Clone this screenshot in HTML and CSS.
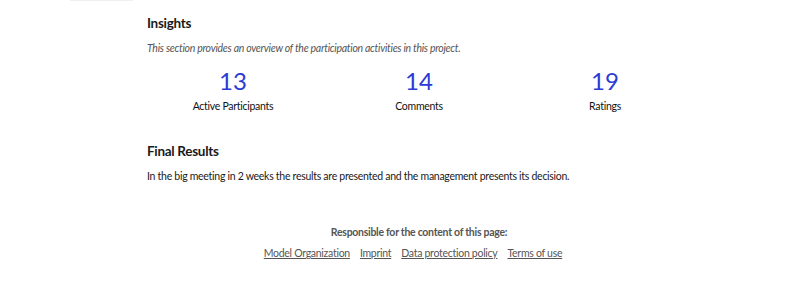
FILE: index.html
```html
<!DOCTYPE html>
<html lang="en">
<head>
    <meta charset="UTF-8">
    <meta name="viewport" content="width=device-width, initial-scale=1.0">
    <title>Insights</title>
    <link rel="stylesheet" href="styles.css">
</head>
<body>
    <div class="top-tab"></div>
    <div class="content">
        <section class="section">
            <h2>Insights</h2>
            <p class="intro">This section provides an overview of the participation activities in this project.</p>
            <div class="stats">
                <div class="stat">
                    <div class="number">13</div>
                    <div class="label">Active Participants</div>
                </div>
                <div class="stat">
                    <div class="number">14</div>
                    <div class="label">Comments</div>
                </div>
                <div class="stat">
                    <div class="number">19</div>
                    <div class="label">Ratings</div>
                </div>
            </div>
        </section>
        <section class="section">
            <h2>Final Results</h2>
            <p class="text">In the big meeting in 2 weeks the results are presented and the management presents its decision.</p>
        </section>
        <footer class="footer">
            <p class="responsible">Responsible for the content of this page:</p>
            <nav class="links">
                <a href="#">Model Organization</a>
                <a href="#">Imprint</a>
                <a href="#">Data protection policy</a>
                <a href="#">Terms of use</a>
            </nav>
        </footer>
    </div>
</body>
</html>
```

FILE: styles.css
```css
body {
    margin: 0;
    font-family: Lato, "Open Sans", sans-serif;
    color: #1a1a1a;
    background-color: #ffffff;
}

.top-tab {
    position: absolute;
    top: 0;
    left: 70px;
    width: 63px;
    height: 1px;
    background-color: #f0f0f0;
}

.content {
    width: 544px;
    margin-left: 147px;
    padding-top: 14px;
    font-size: 10.5px;
    letter-spacing: -0.28px;
}

h2 {
    margin: 0;
    font-size: 13.5px;
    font-weight: bold;
    line-height: 18px;
    letter-spacing: -0.3px;
}

.intro {
    margin: 9px 0 0;
    font-style: italic;
    color: #555;
    line-height: 14px;
}

.stats {
    display: grid;
    grid-template-columns: repeat(3, 1fr);
    margin: 12px -7px 0;
}

.stat {
    text-align: center;
}

.number {
    font-size: 24px;
    line-height: 28px;
    color: #2b3bd4;
    letter-spacing: 0;
}

.label {
    line-height: 14px;
    margin-top: 4px;
    color: #111;
}

.section + .section {
    margin-top: 29px;
}

.text {
    margin: 9px 0 0;
    line-height: 14px;
}

.footer {
    margin: 42px -7px 0;
    text-align: center;
    color: #555;
}

.responsible {
    margin: 0;
    font-weight: bold;
    line-height: 14px;
}

.links {
    display: flex;
    justify-content: center;
    gap: 10px;
    margin-top: 7px;
    margin-right: 12px;
}

.links a {
    color: #555;
    line-height: 14px;
}
```
